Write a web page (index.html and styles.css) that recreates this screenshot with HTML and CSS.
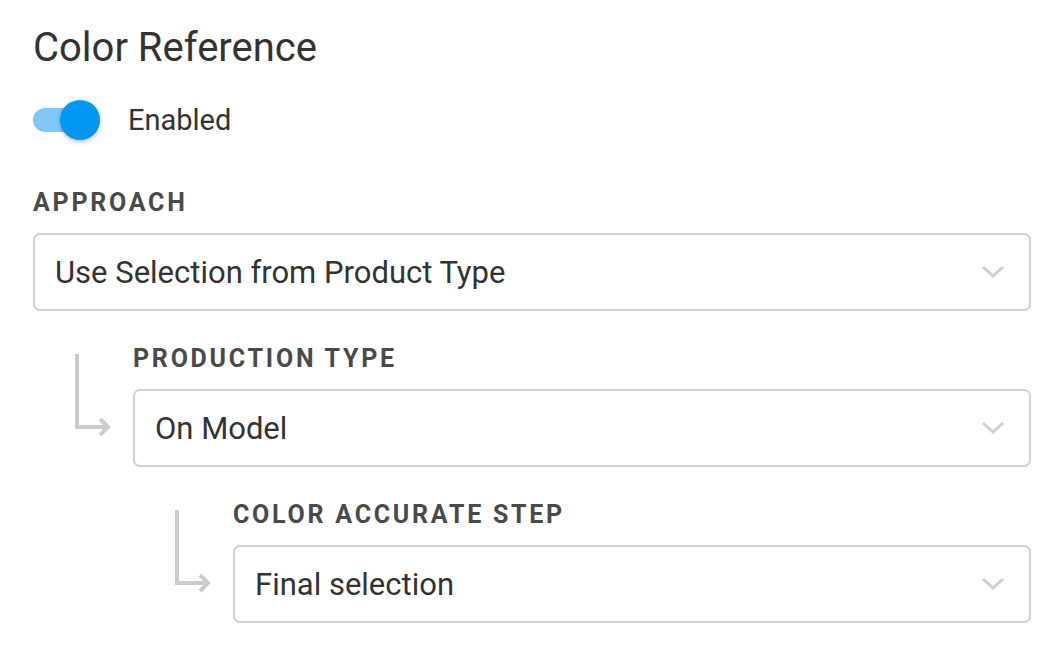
FILE: index.html
```html
<!DOCTYPE html>
<html>
<head>
<meta charset="utf-8">
<link rel="stylesheet" href="styles.css">
</head>
<body>
<div class="panel">
  <h1 class="title">Color Reference</h1>
  <div class="toggle-row">
    <span class="switch"><span class="track"></span><span class="knob"></span></span>
    <span class="toggle-label">Enabled</span>
  </div>
  <div class="field">
    <div class="label">APPROACH</div>
    <div class="select"><span class="value">Use Selection from Product Type</span>
      <svg class="chev" width="24" height="14" viewBox="0 0 24 14"><path d="M2 2 L12 11 L22 2" fill="none" stroke="#d0d0d0" stroke-width="3"/></svg>
    </div>
  </div>
  <div class="nested">
    <div class="connector">
      <svg width="100" height="90" viewBox="0 0 100 90"><path d="M44 0 V73 H75" fill="none" stroke="#cccccc" stroke-width="4"/><path d="M67 65 L75 73 L67 81" fill="none" stroke="#cccccc" stroke-width="4"/></svg>
    </div>
    <div class="nested-body">
      <div class="field">
        <div class="label">PRODUCTION TYPE</div>
        <div class="select"><span class="value">On Model</span>
          <svg class="chev" width="24" height="14" viewBox="0 0 24 14"><path d="M2 2 L12 11 L22 2" fill="none" stroke="#d0d0d0" stroke-width="3"/></svg>
        </div>
      </div>
      <div class="nested">
        <div class="connector">
          <svg width="100" height="90" viewBox="0 0 100 90"><path d="M44 0 V73 H75" fill="none" stroke="#cccccc" stroke-width="4"/><path d="M67 65 L75 73 L67 81" fill="none" stroke="#cccccc" stroke-width="4"/></svg>
        </div>
        <div class="nested-body">
          <div class="field">
            <div class="label">COLOR ACCURATE STEP</div>
            <div class="select"><span class="value">Final selection</span>
              <svg class="chev" width="24" height="14" viewBox="0 0 24 14"><path d="M2 2 L12 11 L22 2" fill="none" stroke="#d0d0d0" stroke-width="3"/></svg>
            </div>
          </div>
        </div>
      </div>
    </div>
  </div>
</div>
</body>
</html>
```

FILE: styles.css
```css
html, body {
  margin: 0;
  padding: 0;
  background: #ffffff;
}
body {
  font-family: Roboto, "Liberation Sans", sans-serif;
  color: #333333;
}
.panel {
  padding: 24px 31px 0 33px;
}
.title {
  margin: 0;
  font-size: 40px;
  line-height: 48px;
  font-weight: 400;
  color: #333333;
}
.toggle-row {
  display: flex;
  align-items: center;
  gap: 27px;
  margin-top: 28px;
  height: 40px;
}
.switch {
  position: relative;
  display: block;
  width: 68px;
  height: 40px;
}
.track {
  position: absolute;
  left: 0;
  top: 8px;
  width: 62px;
  height: 24px;
  border-radius: 12px;
  background: #80c8f7;
}
.knob {
  position: absolute;
  left: 27px;
  top: 0;
  width: 40px;
  height: 40px;
  border-radius: 50%;
  background: #0098f0;
  box-shadow: 0 2px 4px rgba(0,0,0,0.25);
}
.toggle-label {
  font-size: 29px;
  color: #333333;
}
.field {
  margin-top: 48px;
}
.label {
  font-size: 25px;
  line-height: 30px;
  font-weight: 700;
  letter-spacing: 2.75px;
  color: #4a4a4a;
  margin-bottom: 15px;
}
.select {
  display: flex;
  align-items: center;
  justify-content: space-between;
  height: 74px;
  border: 2px solid #d2d2d2;
  border-radius: 7px;
  padding: 0 24px 0 20px;
}
.value {
  font-size: 31px;
  color: #333333;
}
.chev {
  display: block;
}
.nested {
  display: flex;
  margin-top: 33px;
}
.nested-body > .field:first-child {
  margin-top: 0;
}
.connector {
  flex: 0 0 100px;
  padding-top: 10px;
}
.connector svg {
  display: block;
}
.nested-body {
  flex: 1;
  min-width: 0;
}
```
